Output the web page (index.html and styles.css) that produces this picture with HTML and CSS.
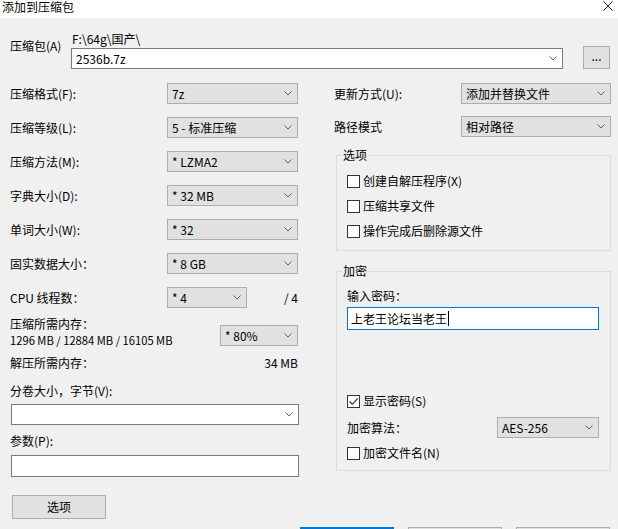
FILE: index.html
```html
<!DOCTYPE html>
<html lang="zh-CN">
<head>
<meta charset="utf-8">
<title>添加到压缩包</title>
<link rel="stylesheet" href="styles.css">
</head>
<body>
<div class="window">
  <div class="titlebar">
    <span class="title">添加到压缩包</span>
    <svg class="close" width="10" height="10" viewBox="0 0 10 10"><path d="M0.5 0.5 L9.5 9.5 M9.5 0.5 L0.5 9.5" stroke="#222" stroke-width="1" fill="none"/></svg>
  </div>

  <div class="archive">
    <div class="archive-label">压缩包(A)</div>
    <div class="archive-main">
      <div class="path">F:\64g\国产\</div>
      <div class="combo edit"><span class="val">2536b.7z</span><svg class="chev" width="8" height="5" viewBox="0 0 8 5"><path d="M0.5 0.5 L4 4 L7.5 0.5" fill="none" stroke="#606060"/></svg></div>
    </div>
    <div class="btn browse">...</div>
  </div>

  <div class="columns">
    <div class="left">
      <div class="row"><span class="lbl">压缩格式(F):</span><div class="combo w131"><span class="val">7z</span><svg class="chev" width="8" height="5" viewBox="0 0 8 5"><path d="M0.5 0.5 L4 4 L7.5 0.5" fill="none" stroke="#606060"/></svg></div></div>
      <div class="row"><span class="lbl">压缩等级(L):</span><div class="combo w131"><span class="val">5 - 标准压缩</span><svg class="chev" width="8" height="5" viewBox="0 0 8 5"><path d="M0.5 0.5 L4 4 L7.5 0.5" fill="none" stroke="#606060"/></svg></div></div>
      <div class="row"><span class="lbl">压缩方法(M):</span><div class="combo w131"><span class="val">* LZMA2</span><svg class="chev" width="8" height="5" viewBox="0 0 8 5"><path d="M0.5 0.5 L4 4 L7.5 0.5" fill="none" stroke="#606060"/></svg></div></div>
      <div class="row"><span class="lbl">字典大小(D):</span><div class="combo w131"><span class="val">* 32 MB</span><svg class="chev" width="8" height="5" viewBox="0 0 8 5"><path d="M0.5 0.5 L4 4 L7.5 0.5" fill="none" stroke="#606060"/></svg></div></div>
      <div class="row"><span class="lbl">单词大小(W):</span><div class="combo w131"><span class="val">* 32</span><svg class="chev" width="8" height="5" viewBox="0 0 8 5"><path d="M0.5 0.5 L4 4 L7.5 0.5" fill="none" stroke="#606060"/></svg></div></div>
      <div class="row"><span class="lbl">固实数据大小：</span><div class="combo w131"><span class="val">* 8 GB</span><svg class="chev" width="8" height="5" viewBox="0 0 8 5"><path d="M0.5 0.5 L4 4 L7.5 0.5" fill="none" stroke="#606060"/></svg></div></div>
      <div class="row cpu"><span class="lbl">CPU 线程数：</span><div class="combo w80"><span class="val">* 4</span><svg class="chev" width="8" height="5" viewBox="0 0 8 5"><path d="M0.5 0.5 L4 4 L7.5 0.5" fill="none" stroke="#606060"/></svg></div><span class="right-text">/ 4</span></div>

      <div class="mem">
        <div class="mem-text">
          <div class="line">压缩所需内存：</div>
          <div class="line memline">1296 MB / 12884 MB / 16105 MB</div>
        </div>
        <div class="combo w78"><span class="val">* 80%</span><svg class="chev" width="8" height="5" viewBox="0 0 8 5"><path d="M0.5 0.5 L4 4 L7.5 0.5" fill="none" stroke="#606060"/></svg></div>
      </div>

      <div class="decomp"><span>解压所需内存：</span><span>34 MB</span></div>

      <div class="line vol-label">分卷大小，字节(V):</div>
      <div class="combo edit full"><span class="val"></span><svg class="chev" width="8" height="5" viewBox="0 0 8 5"><path d="M0.5 0.5 L4 4 L7.5 0.5" fill="none" stroke="#606060"/></svg></div>

      <div class="line param-label">参数(P):</div>
      <div class="textbox full"></div>

      <div class="btn options">选项</div>
    </div>

    <div class="right">
      <div class="row r1"><span class="lbl rl">更新方式(U):</span><div class="combo w150"><span class="val">添加并替换文件</span><svg class="chev" width="8" height="5" viewBox="0 0 8 5"><path d="M0.5 0.5 L4 4 L7.5 0.5" fill="none" stroke="#606060"/></svg></div></div>
      <div class="row r2"><span class="lbl rl">路径模式</span><div class="combo w150"><span class="val">相对路径</span><svg class="chev" width="8" height="5" viewBox="0 0 8 5"><path d="M0.5 0.5 L4 4 L7.5 0.5" fill="none" stroke="#606060"/></svg></div></div>

      <fieldset class="group g-options">
        <legend>选项</legend>
        <div class="check"><span class="box"></span><span>创建自解压程序(X)</span></div>
        <div class="check"><span class="box"></span><span>压缩共享文件</span></div>
        <div class="check"><span class="box"></span><span>操作完成后删除源文件</span></div>
      </fieldset>

      <fieldset class="group g-enc">
        <legend>加密</legend>
        <div class="line">输入密码：</div>
        <div class="textbox pwd"><span>上老王论坛当老王</span><span class="caret"></span></div>
        <div class="check show"><span class="box"><svg width="11" height="11" viewBox="0 0 11 11"><path d="M1.5 5.5 L4.3 8.3 L9.8 2.3" fill="none" stroke="#222" stroke-width="1.1"/></svg></span><span>显示密码(S)</span></div>
        <div class="row algo"><span class="lbl al">加密算法：</span><div class="combo w102"><span class="val">AES-256</span><svg class="chev" width="8" height="5" viewBox="0 0 8 5"><path d="M0.5 0.5 L4 4 L7.5 0.5" fill="none" stroke="#606060"/></svg></div></div>
        <div class="check names"><span class="box"></span><span>加密文件名(N)</span></div>
      </fieldset>
    </div>
  </div>

  <div class="footer">
    <div class="btn fbtn primary" aria-label="确定"></div>
    <div class="btn fbtn" aria-label="取消"></div>
    <div class="btn fbtn" aria-label="帮助"></div>
  </div>
</div>
</body>
</html>
```

FILE: styles.css
```css
html, body {
  margin: 0;
  padding: 0;
  height: 529px;
  overflow: hidden;
}
body {
  background: #f0f0f0;
  font-family: "Noto Sans CJK SC", "Noto Sans", sans-serif;
  font-size: 12px;
  color: #000;
}
.window {
  width: 618px;
}
.titlebar {
  height: 18px;
  background: #fff;
  display: flex;
  justify-content: space-between;
  align-items: flex-start;
}
.title {
  line-height: 14px;
  margin-left: 2px;
  font-size: 12px;
  color: #000;
}
.close {
  margin-top: 1px;
  margin-right: 5px;
}

/* archive row */
.archive {
  display: flex;
  margin-top: 14px;
  padding-left: 10px;
  align-items: flex-start;
}
.archive-label {
  width: 61px;
  line-height: 16px;
  padding-top: 6px;
}
.archive-main {
  width: 492px;
}
.path {
  height: 16px;
  line-height: 14px;
  padding-left: 1px;
}
.browse {
  margin-left: 20px;
  margin-top: 14px;
  width: 27px;
  height: 23px;
  line-height: 18px;
}

/* generic controls */
.combo {
  box-sizing: border-box;
  height: 21px;
  border: 1px solid #adadad;
  background: #e1e1e1;
  display: flex;
  align-items: center;
  justify-content: space-between;
  padding: 0 5px 0 4px;
  flex: none;
}
.combo .val {
  white-space: nowrap;
  line-height: 19px;
}
.combo .chev {
  flex: none;
}
.combo.edit {
  background: #fff;
  border-color: #7a7a7a;
}
.textbox {
  box-sizing: border-box;
  height: 22px;
  border: 1px solid #7a7a7a;
  background: #fff;
}
.btn {
  box-sizing: border-box;
  border: 1px solid #adadad;
  background: #e1e1e1;
  text-align: center;
  flex: none;
}
.w131 { width: 131px; }
.w80 { width: 80px; }
.w78 { width: 78px; }
.w150 { width: 150px; }
.w102 { width: 102px; }
.full { width: 288px; margin-left: 1px; }

.columns {
  display: flex;
  align-items: flex-start;
  margin-top: 14px;
}
.left {
  width: 288px;
  padding-left: 10px;
}
.right {
  width: 277px;
  margin-left: 36px;
}
.row {
  display: flex;
  align-items: center;
  height: 21px;
  margin-bottom: 13px;
}
.lbl {
  width: 157px;
  flex: none;
  white-space: nowrap;
}
.right-text {
  flex: 1;
  text-align: right;
}
.row.cpu {
  margin-bottom: 8px;
}
.line {
  line-height: 16px;
  height: 16px;
  white-space: nowrap;
}
.memline {
  font-size: 11.2px;
}
.mem {
  display: flex;
  justify-content: space-between;
  align-items: flex-start;
  margin-bottom: 7px;
}
.mem .combo {
  margin-top: 9px;
}
.decomp {
  display: flex;
  justify-content: space-between;
  line-height: 16px;
  height: 16px;
}
.vol-label {
  margin-top: 12px;
  margin-bottom: 5px;
}
.param-label {
  margin-top: 8px;
  margin-bottom: 6px;
}
.options {
  margin-top: 18px;
  margin-left: 2px;
  width: 94px;
  height: 24px;
  line-height: 22px;
}

/* right column */
.rl { width: 127px; }
.row.r1 { margin-bottom: 12px; }
.row.r2 { margin-bottom: 0; }

.group {
  box-sizing: border-box;
  width: 275px;
  margin: 0 0 0 2px;
  border: 1px solid #dcdcdc;
  padding: 10px 0 11px 10px;
  min-width: 0;
}
.group legend {
  padding: 0 1px;
  margin-left: -5px;
  line-height: 16px;
}
.g-options {
  margin-top: 10px;
}
.g-enc {
  margin-top: 12px;
  padding-top: 9px;
  padding-bottom: 9px;
}
.check {
  display: flex;
  align-items: center;
  height: 16px;
  line-height: 16px;
  margin-bottom: 9px;
  white-space: nowrap;
}
.check:last-child { margin-bottom: 0; }
.box {
  box-sizing: border-box;
  width: 13px;
  height: 13px;
  border: 1px solid #333;
  background: #fff;
  margin-right: 3px;
  flex: none;
  display: flex;
  align-items: center;
  justify-content: center;
}
.pwd {
  width: 252px;
  height: 23px;
  margin-top: 3px;
  border-color: #0078d7;
  display: flex;
  align-items: center;
  padding-left: 3px;
  font-size: 12px;
}
.caret {
  width: 1px;
  height: 15px;
  background: #000;
  margin-left: 1px;
}
.check.show {
  margin-top: 63px;
  margin-bottom: 8px;
}
.al { width: 150px; }
.row.algo { margin-bottom: 7px; }
.check.names { margin-bottom: 0; }

.footer {
  display: flex;
  justify-content: flex-end;
  padding-right: 8px;
  margin-top: 8px;
}
.fbtn {
  width: 94px;
  height: 23px;
  margin-left: 14px;
}
.fbtn.primary {
  border: 2px solid #0078d7;
}
```
